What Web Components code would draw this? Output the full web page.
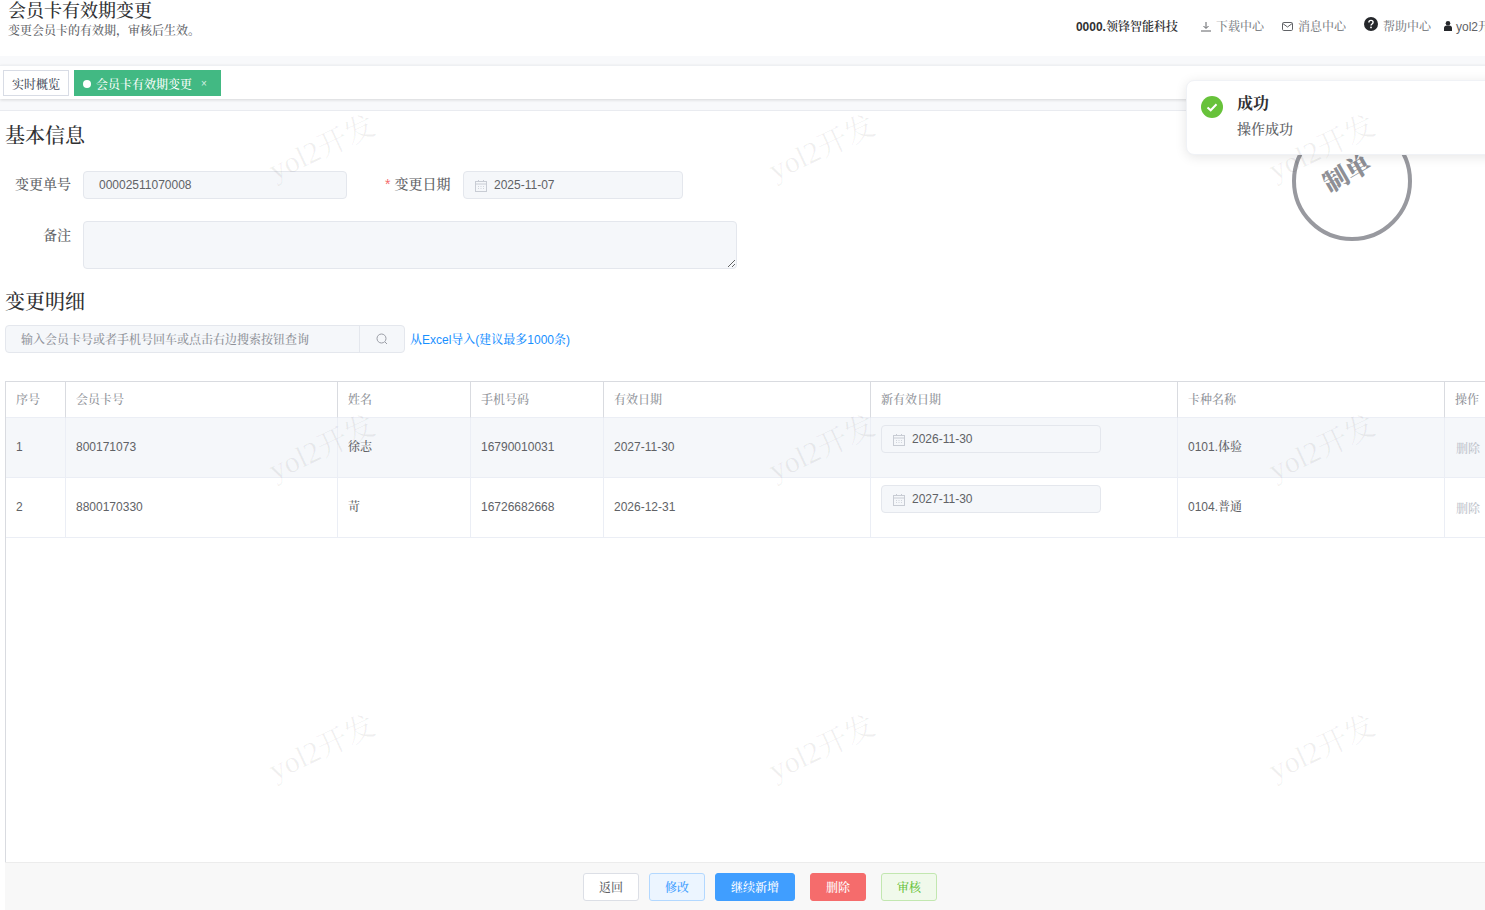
<!DOCTYPE html>
<html lang="zh"><head><meta charset="utf-8"><title>会员卡有效期变更</title>
<style>
html,body{margin:0;height:910px;overflow:hidden;background:#fff;font-family:"Liberation Sans","Noto Serif CJK SC","Noto Sans CJK SC",sans-serif}
</style></head><body>
<erp-page>
  <page-header slot="header" org="0000." orgname="领锋智能科技" user="yol2开发">
    <span slot="title">会员卡有效期变更</span>
    <span slot="sub">变更会员卡的有效期，审核后生效。</span>
  </page-header>
  <tag-bar slot="tabs"></tag-bar>
  <section-title>基本信息</section-title>
  <basic-form></basic-form>
  <section-title class="second">变更明细</section-title>
  <search-row></search-row>
  <detail-table></detail-table>
  <action-bar></action-bar>
  <stamp-mark></stamp-mark>
  <toast-note></toast-note>
  <water-mark></water-mark>
</erp-page>
<script>
const FONT='"Liberation Sans","Noto Serif CJK SC","Noto Sans CJK SC",sans-serif';
const SERIF='"Liberation Serif","Noto Serif CJK SC","Noto Sans CJK SC",serif';
function def(name,html){
  customElements.define(name,class extends HTMLElement{
    constructor(){super();const r=this.attachShadow({mode:'open'});r.innerHTML=typeof html==='function'?html(this):html;}
  });
}
const CAL='<svg width="12" height="12" viewBox="0 0 12 12" fill="none" stroke="#c8ccd4" stroke-width="1"><rect x=".5" y="1.5" width="11" height="10"/><path d="M.5 4h11M3.500 0v2M8.500 0v2"/><path d="M3 6.500h1M5.500 6.500h1M8 6.500h1M3 8.500h1M5.500 8.500h1M8 8.500h1" stroke-width=".8"/></svg>';

def('erp-page',`<style>
:host{display:block;width:1515px;height:910px;position:relative;overflow:visible}
.strip{height:9px;background:#f8f9fb}
.gap{height:11px;background:#f8f9fb;border-bottom:1px solid #e9ebf0}
main{padding-left:5px;display:flex;flex-direction:column;height:799px;box-sizing:border-box;padding-top:11px}
</style>
<slot name="header"></slot><div class="strip"></div><slot name="tabs"></slot><div class="gap"></div>
<main><slot></slot></main>`);

def('page-header',h=>`<style>
:host{display:flex;justify-content:space-between;height:56px;background:#fff;box-sizing:border-box;padding:0 13px 0 8px;font-family:${FONT}}
.l{display:flex;flex-direction:column}
.t{font-size:18px;line-height:22px;color:#303133;font-weight:500}
.s{font-size:12px;line-height:18px;color:#606266;font-weight:500}
.r{display:flex;align-items:center;height:54px;font-size:12px;line-height:16px;color:#808388;font-weight:500}
.org{font-weight:700;color:#303133;margin-right:23px}
.org b{font-weight:600}
.i{display:flex;align-items:center;gap:5px;margin-right:18px}
.i svg{flex:none;margin-top:-2px}
.help{margin-right:13px}
.help svg{margin-top:-6px}
.u{color:#606266;gap:4px;margin-right:0;white-space:nowrap}
</style>
<div class="l"><div class="t"><slot name="title"></slot></div><div class="s"><slot name="sub"></slot></div></div>
<div class="r">
<span class="org">${h.getAttribute('org')}<b>${h.getAttribute('orgname')}</b></span>
<span class="i"><svg width="10" height="11" viewBox="0 0 10 11" fill="none" stroke="#606266"><path d="M5 1v6M2.500 5 5 7.500 7.500 5M0 10h10"/></svg>下载中心</span>
<span class="i"><svg width="11" height="9" viewBox="0 0 11 9" fill="none" stroke="#606266"><rect x=".5" y=".5" width="10" height="8" rx="1.200"/><path d="M.8 1.500 5.500 5l4.700-3.500"/></svg>消息中心</span>
<span class="i help"><svg width="14" height="14" viewBox="0 0 14 14"><circle cx="7" cy="7" r="7" fill="#25272b"/><path d="M4.900 5.400c0-1.300 1-2 2.100-2s2.100.7 2.100 1.900c0 1.700-2.100 1.600-2.100 3.200" fill="none" stroke="#fff" stroke-width="1.400"/><circle cx="7" cy="10.400" r=".9" fill="#fff"/></svg>帮助中心</span>
<span class="i u"><svg width="8" height="10" viewBox="0 0 8 10" fill="#25272b"><circle cx="4" cy="2.300" r="2.300"/><path d="M0 10V7c0-1.600 1.200-2.600 2.600-2.600h2.800C6.800 4.400 8 5.400 8 7v3z"/></svg>${h.getAttribute('user')}</span>
</div>`);

def('tag-bar',`<style>
:host{display:flex;align-items:flex-start;gap:5px;height:34px;box-sizing:border-box;padding:4px 0 0 3px;background:#fff;border-top:1px solid #eef0f3;box-shadow:0 1px 3px rgba(0,0,0,.14);position:relative;font-family:${FONT};font-size:12px;line-height:16px;font-weight:500}
span{box-sizing:border-box;height:26px;display:flex;align-items:center;padding-top:3px}
.a{width:66px;border:1px solid #d8dce5;color:#495060;justify-content:center}
.b{width:147px;background:#42b983;color:#fff;padding-left:9px}
i{width:8px;height:8px;border-radius:50%;background:#fff;margin:-2px 5px 0 0}
em{font-style:normal;font-size:10px;margin:-2px 0 0 9px;color:#d5f0e3}
</style><span class="a">实时概览</span><span class="b"><i></i>会员卡有效期变更<em>×</em></span>`);

def('section-title',`<style>
:host{display:block;font-family:${SERIF};font-size:20px;line-height:28px;color:#303133;font-weight:500}
:host(.second){margin-top:19px}
</style><slot></slot>`);

def('date-input',`<style>
:host{display:flex;align-items:center;gap:7px;box-sizing:border-box;height:28px;padding-left:11px;background:#f5f7fa;border:1px solid #e4e7ed;border-radius:4px;font:12px/16px ${FONT};color:#606266}
svg{flex:none;margin-top:1px}
</style>${CAL}<slot></slot>`);

def('basic-form',`<style>
:host{display:block;margin-top:21px;font-family:${FONT};font-size:14px;color:#606266}
.row{display:flex;height:28px}
.row+.row{height:48px;margin-top:22px}
label{box-sizing:border-box;width:78px;padding-right:12px;text-align:right;line-height:26px;flex:none;font-weight:500}
.row+.row label{line-height:29px}
.second{margin-left:38px;width:78px;padding-right:13px;white-space:nowrap}
.second i{color:#f56c6c;font-style:normal;margin-right:4px}
.in{box-sizing:border-box;width:264px;height:28px;padding-left:15px;background:#f5f7fa;border:1px solid #e4e7ed;border-radius:4px;font-size:12px;line-height:26px}
date-input{width:220px}
textarea{box-sizing:border-box;display:block;width:654px;height:48px;margin:0;background:#f5f7fa;border:1px solid #e4e7ed;border-radius:4px;padding:5px 15px}
</style>
<div class="row"><label>变更单号</label><div class="in">00002511070008</div><label class="second"><i>*</i>变更日期</label><date-input>2025-11-07</date-input></div>
<div class="row"><label>备注</label><textarea disabled aria-label="备注"></textarea></div>`);

def('search-row',`<style>
:host{display:flex;align-items:center;margin-top:9px;font:12px/16px ${FONT}}
.box{box-sizing:border-box;width:400px;height:28px;display:flex;background:#f5f7fa;border:1px solid #e4e7ed;border-radius:4px}
.p{flex:1;padding:1px 0 0 15px;line-height:26px;color:#8f9299;font-weight:500}
.b{width:45px;box-sizing:border-box;border-left:1px solid #e4e7ed;display:flex;align-items:center;justify-content:center}
a{margin:2px 0 0 5px;color:#1890ff;font-weight:500}
</style><div class="box"><div class="p">输入会员卡号或者手机号回车或点击右边搜索按钮查询</div><div class="b"><svg width="12" height="12" viewBox="0 0 12 12" fill="none" stroke="#9a9da5"><circle cx="5.500" cy="5.500" r="4.500"/><path d="m9 9 2 2"/></svg></div></div><a>从Excel导入(建议最多1000条)</a>`);

const cols=[60,272,133,133,267,307,267,71];
const heads=['序号','会员卡号','姓名','手机号码','有效日期','新有效日期','卡种名称','操作'];
const rows=[['1','800171073','徐志','16790010031','2027-11-30','2026-11-30','0101.体验'],
            ['2','8800170330','苛','16726682668','2026-12-31','2027-11-30','0104.普通']];
def('detail-table',`<style>
:host{display:block;margin-top:28px;height:481px;border-left:1px solid #d9dbe0;font:500 12px/16px ${FONT};color:#606266;flex:none}
table{border-collapse:separate;border-spacing:0;table-layout:fixed;width:1510px}
th{height:35px;padding:0 0 0 10px;text-align:left;font-weight:500;color:#909399;border-top:1px solid #d9dbe0;border-right:1px solid #d9dbe0;border-bottom:1px solid #ebeef5}
td{height:57px;padding:0 0 2px 10px;border-right:1px solid #ebeef5;border-bottom:1px solid #ebeef5}
tr.on td{background:#f5f7fa}
td.d{vertical-align:top;padding:7px 0 0 10px;height:52px}
date-input{width:220px}
td.del{color:#c0c4cc;padding:2px 0 0 11px;height:57px}
th:last-child,td:last-child{border-right:0}
</style><table><colgroup>${cols.map(c=>`<col style="width:${c}px">`).join('')}</colgroup>
<thead><tr>${heads.map(h=>`<th>${h}</th>`).join('')}</tr></thead>
<tbody>${rows.map((r,i)=>`<tr class="${i?'':'on'}">${r.map((c,j)=>j==5?`<td class="d"><date-input>${c}</date-input></td>`:`<td>${c}</td>`).join('')}<td class="del">删除</td></tr>`).join('')}</tbody></table>`);

def('ui-button',`<style>
:host{display:flex;align-items:center;justify-content:center;box-sizing:border-box;width:56px;height:28px;padding-top:2px;border-radius:3px;border:1px solid #dcdfe6;background:#fff;color:#606266;font:500 12px/16px ${FONT}}
:host(.wide){width:80px}
:host(.plain){background:#ecf5ff;border-color:#b3d8ff;color:#409eff}
:host(.primary){background:#409eff;border-color:#409eff;color:#fff}
:host(.danger){background:#f56c6c;border-color:#f56c6c;color:#fff}
:host(.ok){background:#f0f9eb;border-color:#c2e7b0;color:#67c23a}
</style><slot></slot>`);

def('action-bar',`<style>
:host{display:flex;align-items:center;justify-content:center;flex:none;height:48px;box-sizing:border-box;background:#f8f8f8;border-top:1px solid #ececec}
.g{margin-left:10px}.h{margin-left:15px}
</style><ui-button>返回</ui-button><ui-button class="plain g">修改</ui-button><ui-button class="primary wide g">继续新增</ui-button><ui-button class="danger h">删除</ui-button><ui-button class="ok h">审核</ui-button>`);

def('stamp-mark',`<style>
:host{position:absolute;left:1292px;top:121px;width:120px;height:120px;box-sizing:border-box;border:4px solid #98999f;border-radius:50%;display:flex;align-items:center;justify-content:center}
span{font:900 25px/30px ${FONT};color:#8e8f95;transform:translate(-5px,-8px) rotate(-30deg);white-space:nowrap}
</style><span>制单</span>`);

def('toast-note',`<style>
:host{position:absolute;left:1186px;top:80px;width:330px;height:75px;box-sizing:border-box;background:#fff;border:1px solid #f0f2f6;border-radius:8px;box-shadow:0 2px 12px rgba(0,0,0,.1);font-family:${FONT}}
svg{position:absolute;left:13px;top:14px}
.t{position:absolute;left:50px;top:12px;font-size:16px;line-height:22px;font-weight:700;color:#303133}
.m{position:absolute;left:50px;top:38px;font-size:14px;line-height:21px;color:#606266;font-weight:500}
</style><svg width="24" height="24" viewBox="0 0 24 24"><circle cx="12" cy="12" r="11" fill="#67c23a"/><path d="m7.500 12.500 3.200 2.800 5.800-6" fill="none" stroke="#fff" stroke-width="2"/></svg><div class="t">成功</div><div class="m">操作成功</div>`);

def('water-mark',()=>{let s='';for(let y=0;y<3;y++)for(let x=0;x<3;x++)s+='<div><span>yol2开发</span></div>';
return `<style>
:host{position:absolute;left:72px;top:0;display:grid;grid-template-columns:repeat(3,500px);grid-auto-rows:300px;pointer-events:none;z-index:5}
div{position:relative;height:300px}
span{position:absolute;left:192px;top:123px;font:30px ${SERIF};color:rgba(0,0,0,.06);transform:rotate(-25deg);white-space:nowrap}
</style>${s}`});
</script>
</body></html>
